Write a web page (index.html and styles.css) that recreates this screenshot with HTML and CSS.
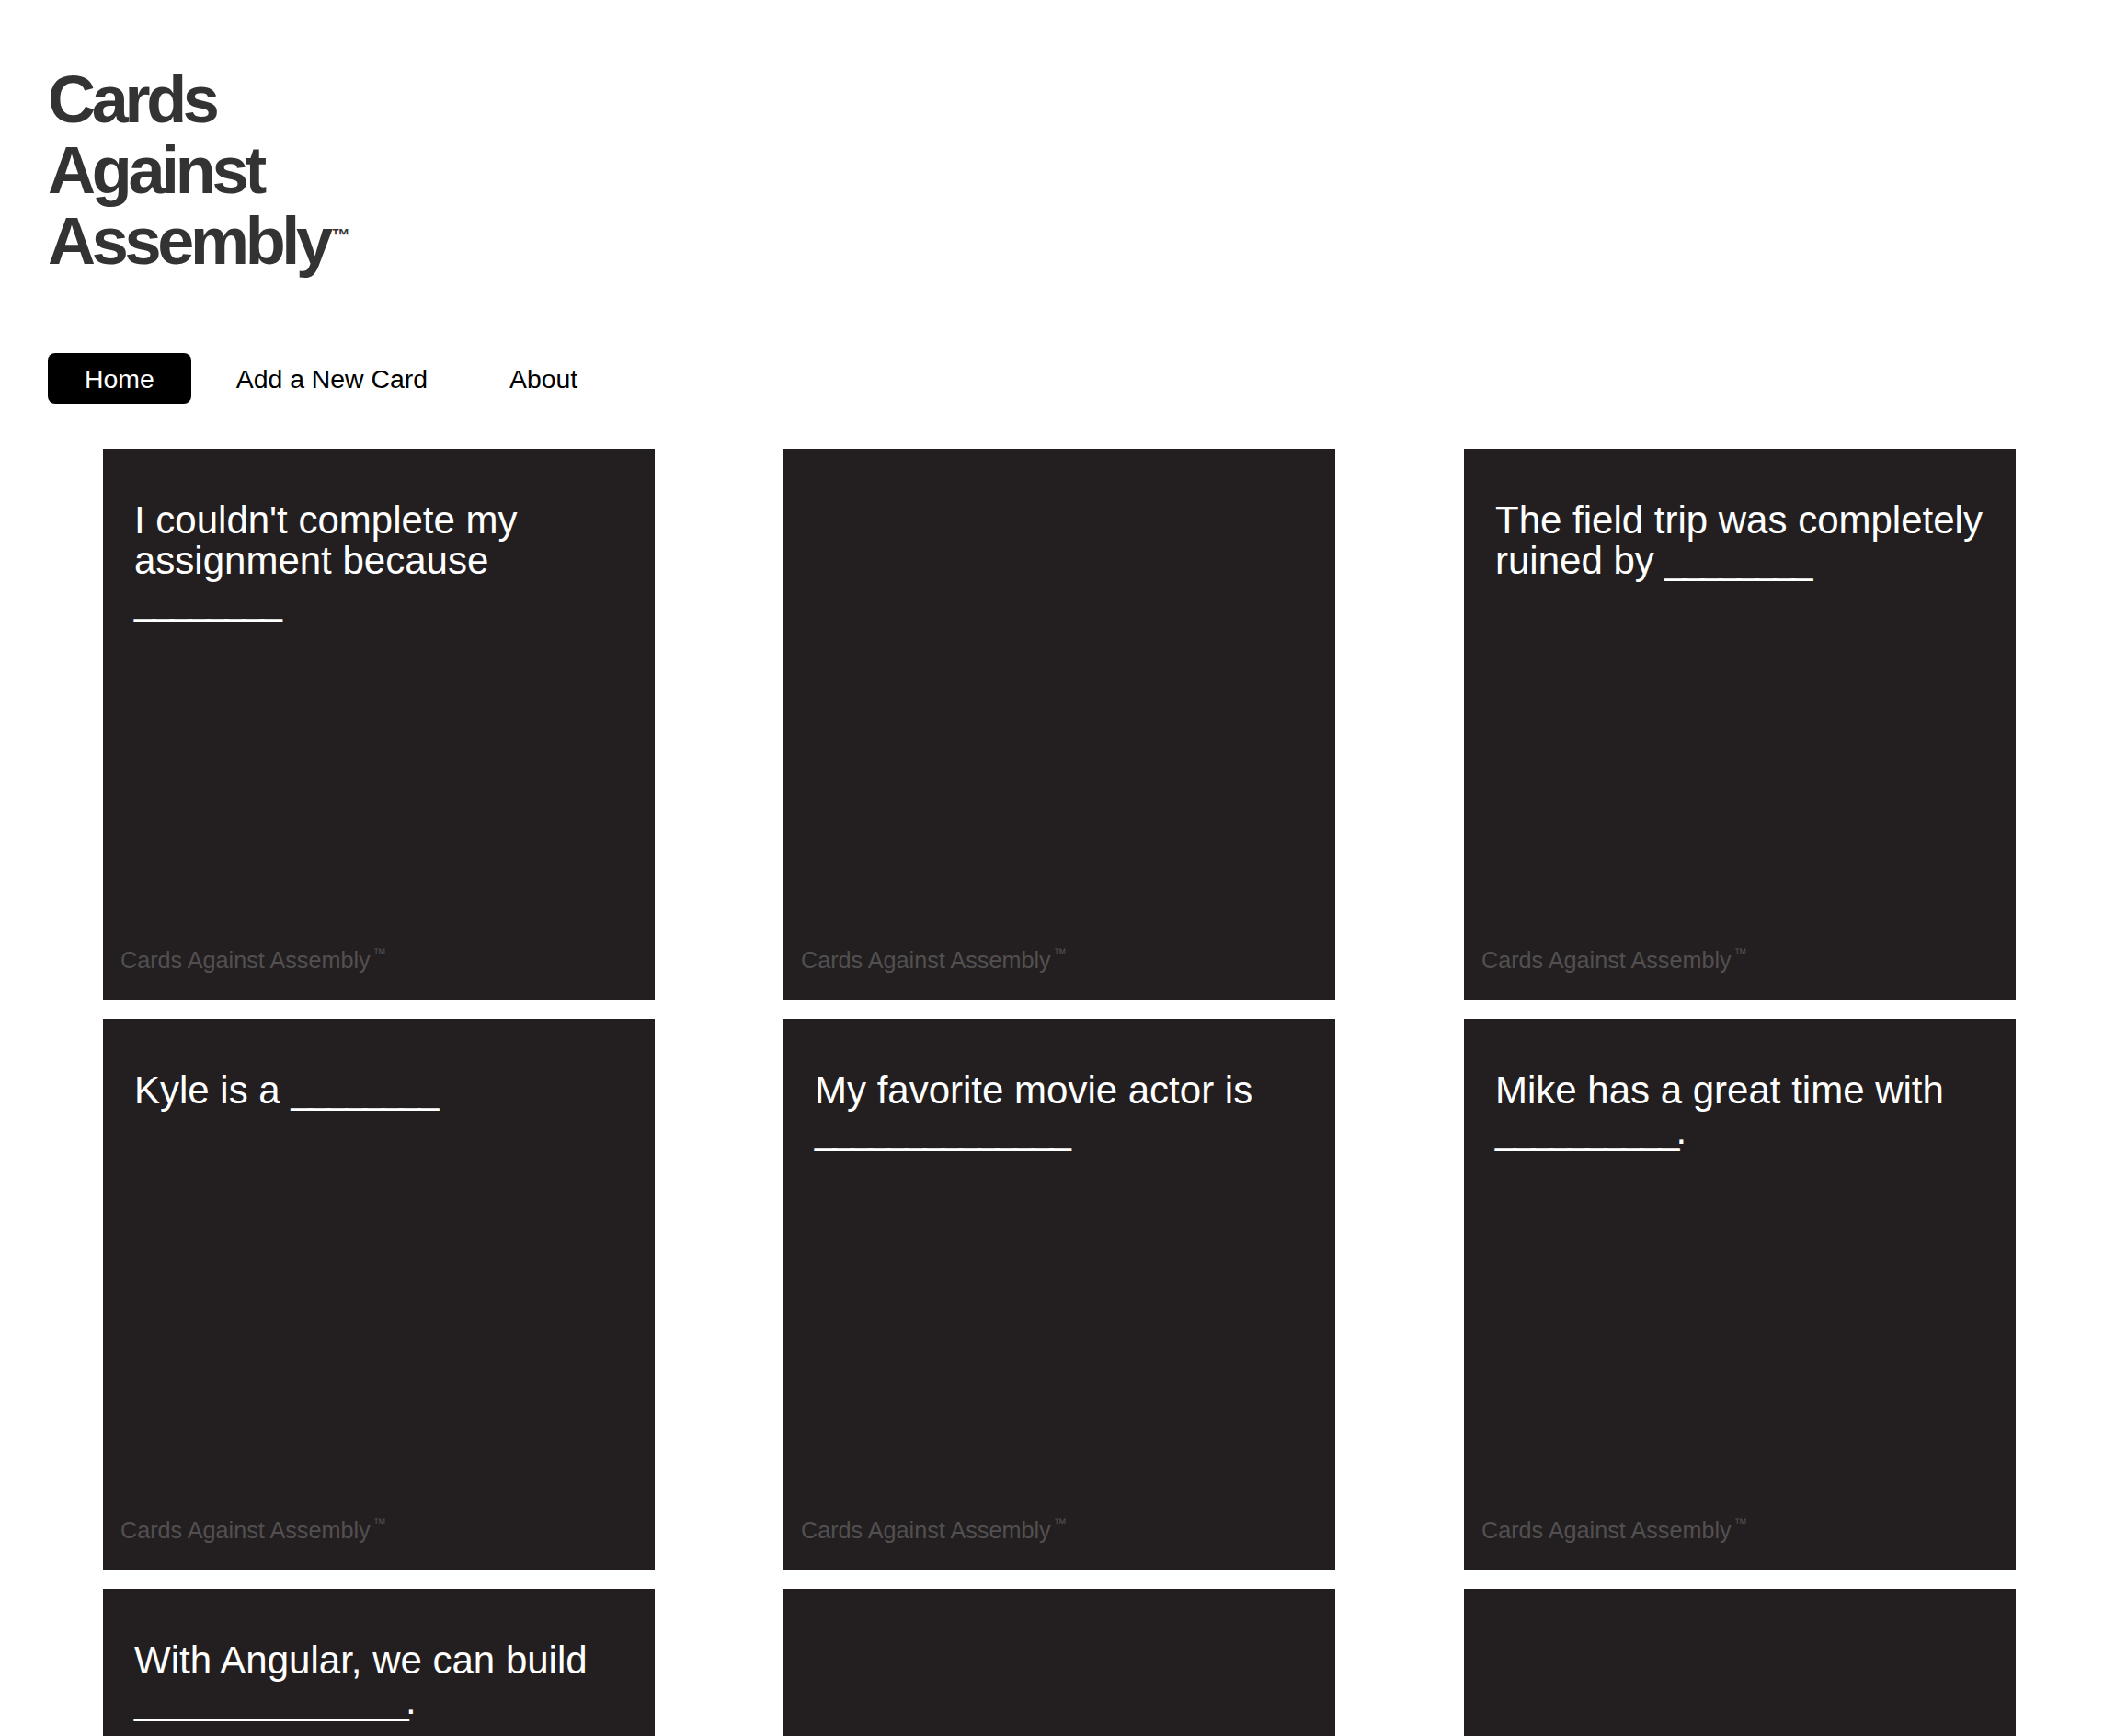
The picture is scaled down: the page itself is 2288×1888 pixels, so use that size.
FILE: index.html
```html
<!DOCTYPE html>
<html lang="en">
<head>
<meta charset="utf-8">
<title>Cards Against Assembly</title>
<link rel="stylesheet" href="styles.css">
</head>
<body>
<div class="page">
  <header class="masthead">
    <h1 class="logo">
      <span class="logo-line">Cards</span>
      <span class="logo-line">Against</span>
      <span class="logo-line">Assembly<sup class="logo-tm">™</sup></span>
    </h1>
    <nav class="nav">
      <a class="nav-link active" href="#">Home</a>
      <a class="nav-link" href="#">Add a New Card</a>
      <a class="nav-link" href="#">About</a>
    </nav>
  </header>

  <main class="deck">
    <div class="card">
      <p class="card-text">I couldn't complete my assignment because <span class="blank">________</span></p>
      <p class="card-brand">Cards Against Assembly<sup class="brand-tm">™</sup></p>
    </div>
    <div class="card">
      <p class="card-text"></p>
      <p class="card-brand">Cards Against Assembly<sup class="brand-tm">™</sup></p>
    </div>
    <div class="card">
      <p class="card-text">The field trip was completely ruined by <span class="blank">________</span></p>
      <p class="card-brand">Cards Against Assembly<sup class="brand-tm">™</sup></p>
    </div>
    <div class="card">
      <p class="card-text">Kyle is a <span class="blank">________</span></p>
      <p class="card-brand">Cards Against Assembly<sup class="brand-tm">™</sup></p>
    </div>
    <div class="card">
      <p class="card-text">My favorite movie actor is <span class="blank">______________</span></p>
      <p class="card-brand">Cards Against Assembly<sup class="brand-tm">™</sup></p>
    </div>
    <div class="card">
      <p class="card-text">Mike has a great time with <span class="blank">__________</span>.</p>
      <p class="card-brand">Cards Against Assembly<sup class="brand-tm">™</sup></p>
    </div>
    <div class="card">
      <p class="card-text">With Angular, we can build <span class="blank">_______________</span>.</p>
      <p class="card-brand">Cards Against Assembly<sup class="brand-tm">™</sup></p>
    </div>
    <div class="card">
      <p class="card-text"></p>
      <p class="card-brand">Cards Against Assembly<sup class="brand-tm">™</sup></p>
    </div>
    <div class="card">
      <p class="card-text"></p>
      <p class="card-brand">Cards Against Assembly<sup class="brand-tm">™</sup></p>
    </div>
  </main>
</div>
</body>
</html>
```

FILE: styles.css
```css
* {
  box-sizing: border-box;
}

html, body {
  margin: 0;
  padding: 0;
  background: #ffffff;
}

body {
  font-family: "Liberation Sans", Arial, Helvetica, sans-serif;
  color: #000;
}

.page {
  padding: 70px 52px 0 52px;
}

.masthead {
  display: flex;
  flex-direction: column;
  align-items: flex-start;
}

.logo {
  margin: 0;
  font-size: 72px;
  font-weight: 700;
  line-height: 77px;
  letter-spacing: -4.3px;
  color: #333333;
  display: flex;
  flex-direction: column;
}

.logo-line {
  display: block;
  white-space: nowrap;
}

.logo-tm {
  font-size: 20px;
  letter-spacing: 0;
  line-height: 0;
  vertical-align: 24px;
  margin-left: 3px;
}

.nav {
  display: flex;
  gap: 9px;
  margin-top: 83px;
}

.nav-link {
  display: block;
  height: 55px;
  line-height: 56px;
  padding: 0 40px;
  font-size: 28.4px;
  color: #000;
  text-decoration: none;
  border-radius: 8px;
}

.nav-link.active {
  background: #000;
  color: #fff;
}

.deck {
  display: grid;
  grid-template-columns: repeat(3, 600px);
  column-gap: 140px;
  row-gap: 20px;
  margin: 49px 0 0 60px;
}

.card {
  width: 600px;
  height: 600px;
  background: #231f20;
  display: flex;
  flex-direction: column;
  padding: 56px 30px 29px 34px;
}

.card-text {
  margin: 0;
  font-size: 42px;
  line-height: 44px;
  color: #ffffff;
}

.blank {
  letter-spacing: -3.7px;
}

.card-brand {
  margin: auto 0 0 -15px;
  font-size: 25.2px;
  line-height: 30px;
  color: #524f50;
  white-space: nowrap;
}

.brand-tm {
  font-size: 14px;
  line-height: 0;
  vertical-align: 12px;
  margin-left: 3px;
}
```
